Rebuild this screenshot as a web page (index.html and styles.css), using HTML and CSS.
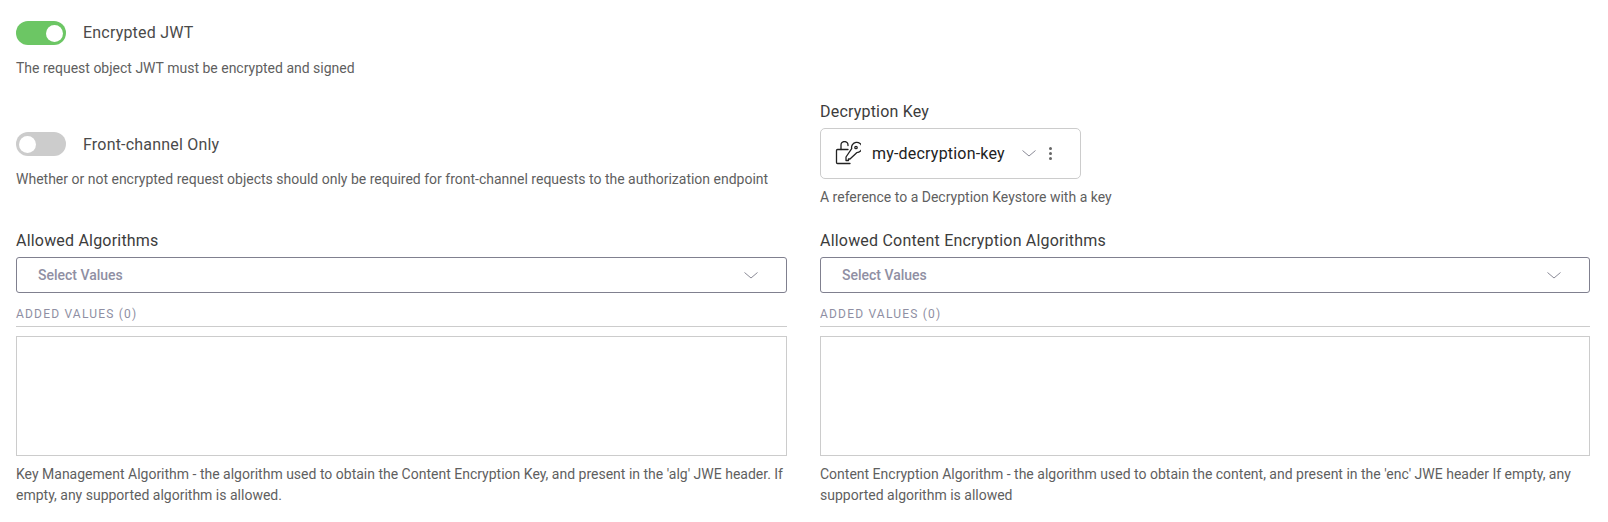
FILE: index.html
```html
<!DOCTYPE html>
<html lang="en">
<head>
  <meta charset="UTF-8" />
  <title>Encrypted JWT</title>
  <link rel="stylesheet" href="styles.css">
</head>
<body>
  <div class="form-grid">
    <!-- Encrypted JWT -->
    <div class="field field-jwt">
      <div class="switch-row">
        <span class="switch switch-on"><span class="knob"></span></span>
        <span class="switch-label label-up">Encrypted JWT</span>
      </div>
      <p class="help">The request object JWT must be encrypted and signed</p>
    </div>
    <div class="field-empty"></div>

    <!-- Front-channel Only -->
    <div class="field field-front">
      <div class="switch-row">
        <span class="switch"><span class="knob"></span></span>
        <span class="switch-label">Front-channel Only</span>
      </div>
      <p class="help">Whether or not encrypted request objects should only be required for front-channel requests to the authorization endpoint</p>
    </div>

    <!-- Decryption Key -->
    <div class="field field-key">
      <div class="field-label">Decryption Key</div>
      <div class="key-box">
        <svg class="key-icon" width="26" height="26" viewBox="0 1.5 26 26" fill="none" stroke="#222" stroke-width="1.3" stroke-linecap="round" stroke-linejoin="round">
          <path d="M6 10V5.5a3.5 3.5 0 0 1 7 0V6"/>
          <path d="M13 10H2.5a1 1 0 0 0-1 1v12a1 1 0 0 0 1 1H15"/>
          <path d="M16.2 10.2a5.2 5.2 0 1 1 5 4L14.5 20.5H13V22H10.5V18.5Z" transform="translate(.5 -1)"/>
          <circle cx="21" cy="8" r="1.2"/>
        </svg>
        <span class="key-name">my-decryption-key</span>
        <svg class="chevron chevron-small" width="14" height="7" viewBox="0 0 14 7" fill="none" stroke="#8a8a96" stroke-width="1">
          <path d="M.5.5L7 6 13.5.5"/>
        </svg>
        <span class="dots"><i></i><i></i><i></i></span>
      </div>
      <p class="help">A reference to a Decryption Keystore with a key</p>
    </div>

    <!-- Allowed Algorithms -->
    <div class="field">
      <div class="field-label">Allowed Algorithms</div>
      <div class="select-box">
        <span class="placeholder">Select Values</span>
        <svg class="chevron" width="14" height="7" viewBox="0 0 14 7" fill="none" stroke="#8a8a96" stroke-width="1">
          <path d="M.5.5L7 6 13.5.5"/>
        </svg>
      </div>
      <div class="added-label">ADDED VALUES (0)</div>
      <div class="added-list"></div>
      <p class="help help-multi">Key Management Algorithm - the algorithm used to obtain the Content Encryption Key, and present in the 'alg' JWE header. If empty, any supported algorithm is allowed.</p>
    </div>

    <!-- Allowed Content Encryption Algorithms -->
    <div class="field">
      <div class="field-label">Allowed Content Encryption Algorithms</div>
      <div class="select-box">
        <span class="placeholder">Select Values</span>
        <svg class="chevron" width="14" height="7" viewBox="0 0 14 7" fill="none" stroke="#8a8a96" stroke-width="1">
          <path d="M.5.5L7 6 13.5.5"/>
        </svg>
      </div>
      <div class="added-label">ADDED VALUES (0)</div>
      <div class="added-list"></div>
      <p class="help help-multi">Content Encryption Algorithm - the algorithm used to obtain the content, and present in the 'enc' JWE header If empty, any supported algorithm is allowed</p>
    </div>
  </div>
</body>
</html>
```

FILE: styles.css
```css
body {
  margin: 0;
  padding: 21px 16px 0;
  background: #fff;
  color: #3c3c3c;
  font-family: Roboto, "Liberation Sans", sans-serif;
}
.form-grid {
  display: grid;
  grid-template-columns: 771px 770px;
  column-gap: 33px;
}
.help {
  margin: 0;
  font-size: 14px;
  line-height: 21px;
  color: #5f5f5f;
}
.help-multi {
  margin-top: 8px;
}
/* Switch rows */
.field-jwt {
  height: 80px;
}
.field-front {
  padding-top: 31px;
}
.field-key {
  height: 129px;
}
.switch-row {
  display: flex;
  align-items: center;
  height: 24px;
  margin-bottom: 13px;
}
.switch {
  display: flex;
  align-items: center;
  justify-content: flex-start;
  width: 50px;
  height: 24px;
  padding: 0 3px;
  box-sizing: border-box;
  border-radius: 12px;
  background: #ccc;
}
.switch-on {
  justify-content: flex-end;
  background: #6cc664;
}
.knob {
  width: 17px;
  height: 17px;
  border-radius: 50%;
  background: #fff;
}
.switch-label {
  margin-left: 17px;
  font-size: 16px;
  letter-spacing: 0.2px;
  color: #4a4a4a;
}
.label-up {
  margin-bottom: 2px;
}
/* Field labels */
.field-label {
  box-sizing: border-box;
  height: 20px;
  padding-top: 1px;
  margin-bottom: 7px;
  font-size: 16px;
  line-height: 20px;
  letter-spacing: 0.2px;
  color: #3c3c3c;
}
/* Decryption key reference */
.key-box {
  display: flex;
  align-items: center;
  width: 261px;
  height: 51px;
  box-sizing: border-box;
  padding: 0 20px 0 14px;
  margin-bottom: 8px;
  border: 1px solid #ccc;
  border-radius: 5px;
}
.key-name {
  margin-left: 11px;
  font-size: 16px;
  letter-spacing: 0.2px;
  color: #222;
}
.chevron-small {
  margin-left: 17px;
}
.dots {
  display: flex;
  flex-direction: column;
  gap: 2px;
  margin-left: 13px;
}
.dots i {
  display: block;
  width: 3px;
  height: 3px;
  border-radius: 50%;
  background: #666;
}
/* Multi select */
.select-box {
  display: flex;
  align-items: center;
  justify-content: space-between;
  height: 36px;
  box-sizing: border-box;
  padding: 0 28px 0 21px;
  border: 1px solid #80808f;
  border-radius: 3px;
}
.placeholder {
  font-size: 14px;
  font-weight: 500;
  color: #8f8fa3;
}
.added-label {
  margin-top: 14px;
  padding-bottom: 4px;
  border-bottom: 1px solid #ccc;
  font-size: 12px;
  line-height: 15px;
  letter-spacing: 1.2px;
  color: #8f8fa3;
}
.added-list {
  height: 120px;
  margin-top: 9px;
  box-sizing: border-box;
  border: 1px solid #ccc;
}
```
